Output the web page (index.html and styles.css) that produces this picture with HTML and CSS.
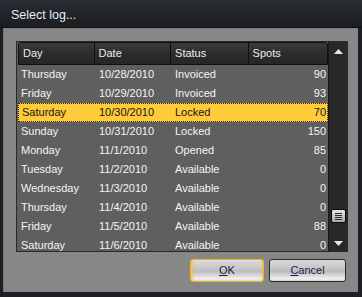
FILE: index.html
```html
<!DOCTYPE html>
<html>
<head>
<meta charset="utf-8">
<link rel="stylesheet" href="styles.css">
</head>
<body>
<div class="window">
  <div class="titlebar">Select log...</div>
  <div class="panel">
    <div class="grid">
      <div class="table">
        <div class="header">
          <div class="hcell c1">Day</div>
          <div class="hcell c2">Date</div>
          <div class="hcell c3">Status</div>
          <div class="hcell c4">Spots</div>
        </div>
        <div class="row"><div class="cell c1">Thursday</div><div class="cell c2">10/28/2010</div><div class="cell c3">Invoiced</div><div class="cell c4 num">90</div></div>
        <div class="row"><div class="cell c1">Friday</div><div class="cell c2">10/29/2010</div><div class="cell c3">Invoiced</div><div class="cell c4 num">93</div></div>
        <div class="row selected"><div class="cell c1">Saturday</div><div class="cell c2">10/30/2010</div><div class="cell c3">Locked</div><div class="cell c4 num">70</div></div>
        <div class="row"><div class="cell c1">Sunday</div><div class="cell c2">10/31/2010</div><div class="cell c3">Locked</div><div class="cell c4 num">150</div></div>
        <div class="row"><div class="cell c1">Monday</div><div class="cell c2">11/1/2010</div><div class="cell c3">Opened</div><div class="cell c4 num">85</div></div>
        <div class="row"><div class="cell c1">Tuesday</div><div class="cell c2">11/2/2010</div><div class="cell c3">Available</div><div class="cell c4 num">0</div></div>
        <div class="row"><div class="cell c1">Wednesday</div><div class="cell c2">11/3/2010</div><div class="cell c3">Available</div><div class="cell c4 num">0</div></div>
        <div class="row"><div class="cell c1">Thursday</div><div class="cell c2">11/4/2010</div><div class="cell c3">Available</div><div class="cell c4 num">0</div></div>
        <div class="row"><div class="cell c1">Friday</div><div class="cell c2">11/5/2010</div><div class="cell c3">Available</div><div class="cell c4 num">88</div></div>
        <div class="row"><div class="cell c1">Saturday</div><div class="cell c2">11/6/2010</div><div class="cell c3">Available</div><div class="cell c4 num">0</div></div>
      </div>
      <div class="scrollbar">
        <svg class="arrow up" width="9" height="5" viewBox="0 0 9 5"><polygon points="4.5,0 9,5 0,5" fill="#e8e8e8"/></svg>
        <div class="track"></div>
        <div class="thumb"><span></span><span></span><span></span><span></span></div>
        <svg class="arrow down" width="9" height="5" viewBox="0 0 9 5"><polygon points="0,0 9,0 4.5,5" fill="#e8e8e8"/></svg>
      </div>
    </div>
    <div class="buttons">
      <div class="btn default"><u>O</u>K</div>
      <div class="btn cancel"><u>C</u>ancel</div>
    </div>
  </div>
</div>
</body>
</html>
```
FILE: styles.css
```css
html, body {
  margin: 0;
  padding: 0;
  background: #1c1e22;
  width: 362px;
  height: 297px;
  overflow: hidden;
  font-family: "Liberation Sans", Arial, sans-serif;
}
.window {
  width: 362px;
  height: 297px;
  display: flex;
  flex-direction: column;
  background: #1d1f23;
}
.titlebar {
  height: 28px;
  box-sizing: border-box;
  padding: 7px 0 0 11px;
  font-size: 12.5px;
  color: #e4ecf4;
  background: linear-gradient(#2c2f35 0, #23262b 35%, #1b1d21 100%);
  border-bottom: 1px solid #121316;
  line-height: 16px;
}
.panel {
  margin: 0 4px 4px 3px;
  height: 264px;
  box-sizing: border-box;
  background: #878787;
  padding: 12px 10px 0 12px;
  display: flex;
  flex-direction: column;
  border-left: 1px solid #7a7a7a;
  border-top: 1px solid #7d7d7d;
}
.grid {
  height: 211px;
  box-sizing: border-box;
  border: 1px solid #2a2a2a;
  display: flex;
  background: #5f5f5f;
}
.table {
  width: 312px;
  overflow: hidden;
  display: flex;
  flex-direction: column;
  background: #5f5f5f;
}
.header {
  display: flex;
  height: 23px;
  flex: none;
  box-sizing: border-box;
  margin-left: 1px;
  background: linear-gradient(#3a3a3a, #2c2c2c 50%, #262626);
  border: 1px solid #101010;
  border-radius: 3px 3px 0 0;
}
.hcell {
  font-size: 11px;
  color: #ececec;
  line-height: 21px;
  padding-left: 4px;
  box-sizing: border-box;
  border-right: 1px solid #0e0e0e;
}
.hcell.c4 { border-right: none; }
.c1 { width: 77px; }
.c2 { width: 77px; }
.c3 { width: 78px; }
.c4 { width: 79px; }
.header .c1 { width: 76px; padding-left: 4px; }
.row {
  display: flex;
  height: 19px;
  flex: none;
  box-sizing: border-box;
  border: 1px solid transparent;
}
.cell {
  font-size: 11px;
  color: #f4f4f4;
  line-height: 17px;
  padding-left: 3px;
  box-sizing: border-box;
  white-space: nowrap;
}
.row .c1 { width: 77px; }
.row .c2 { padding-left: 4px; }
.row .c3 { padding-left: 3px; }
.cell.num {
  text-align: right;
  padding-right: 1px;
  flex: 1;
}
.row.selected {
  background: #ffcb3a;
  border: 1px dotted #3a2a00;
  margin-left: 1px;
}
.row.selected .c1 { width: 76px; }
.row.selected .cell { color: #151515; }
.scrollbar {
  width: 19px;
  box-sizing: border-box;
  background: #282828;
  border-left: 1px solid #1a1a1a;
  display: flex;
  flex-direction: column;
  align-items: center;
}
.arrow { display: block; flex: none; margin-left: 1px; }
.arrow.up { margin-top: 7px; }
.track { flex: 1; }
.thumb {
  width: 15px;
  height: 14px;
  box-sizing: border-box;
  border: 1px solid #0c0c0c;
  border-radius: 2px;
  background: linear-gradient(#e4e4e4, #a8a8a8);
  display: flex;
  flex-direction: column;
  justify-content: center;
  gap: 1px;
  padding: 0 3px;
  margin-bottom: 18px;
}
.thumb span {
  display: block;
  height: 1px;
  background: #303030;
}
.arrow.down { margin-bottom: 5px; }
.buttons {
  display: flex;
  justify-content: flex-end;
  gap: 5px;
  margin-top: 7px;
  padding-right: 2px;
}
.btn {
  height: 23px;
  box-sizing: border-box;
  border-radius: 3px;
  font-size: 11px;
  color: #1c1c50;
  text-align: center;
  line-height: 21px;
}
.btn u { text-decoration: underline; }
.btn.default {
  width: 74px;
  border: 1px solid #f0b522;
  background: linear-gradient(90deg, rgba(255,190,40,0.75) 0, rgba(255,190,40,0) 4px, rgba(255,190,40,0) 70px, rgba(255,190,40,0.75) 72px),
              linear-gradient(#dcdcdc 0, #c4c4c4 45%, #bdbdbd 55%, #f2f2f2 90%, #d0d0d0 100%);
}
.btn.cancel {
  width: 77px;
  border: 1px solid #2a2a2a;
  background: linear-gradient(#dadada 0, #c2c2c2 45%, #bbbbbb 55%, #f2f2f2 90%, #cfcfcf 100%);
}
```
